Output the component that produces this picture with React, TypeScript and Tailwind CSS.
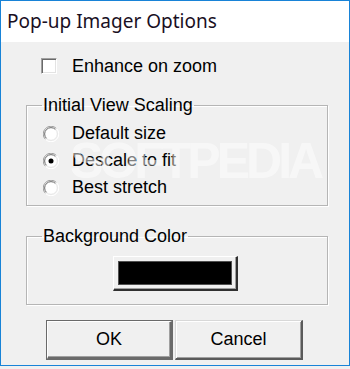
import React from "react";

function Checkbox() {
  return (
    <div className="w-[16px] h-[16px] shrink-0 bg-white border-t border-l border-[#a0a0a0] border-r-white border-b-white border-r border-b shadow-[inset_1px_1px_0_#696969,inset_-1px_-1px_0_#e3e3e3]" />
  );
}

function Radio({ checked }: { checked?: boolean }) {
  return (
    <svg width="16" height="16" viewBox="0 0 16 16" className="shrink-0">
      <circle cx="8" cy="8" r="7" fill="#ffffff" />
      <path d="M2.5 13.5 A7.5 7.5 0 0 1 13.5 2.5" fill="none" stroke="#a0a0a0" strokeWidth="1" />
      <path d="M3.5 12.5 A6 6 0 0 1 12.5 3.5" fill="none" stroke="#696969" strokeWidth="1" />
      <path d="M13.5 2.5 A7.5 7.5 0 0 1 2.5 13.5" fill="none" stroke="#ffffff" strokeWidth="1" />
      <path d="M12.5 3.5 A6 6 0 0 1 3.5 12.5" fill="none" stroke="#e3e3e3" strokeWidth="1" />
      {checked && <circle cx="8" cy="8" r="2.5" fill="#000" />}
    </svg>
  );
}

function RadioRow({ label, checked }: { label: string; checked?: boolean }) {
  return (
    <div className="h-[27px] flex items-center gap-[13px]">
      <Radio checked={checked} />
      <span className="text-[18px] leading-[21px] text-black">{label}</span>
    </div>
  );
}

export default function App() {
  return (
    <div
      className="w-[350px] h-[369px] bg-[#f0f0f0] relative overflow-hidden"
      style={{ fontFamily: '"Liberation Sans", Arial, sans-serif' }}
    >
      <div className="h-[366px] border border-[#1883d7] flex flex-col">
        <div
          className="h-[41px] shrink-0 bg-white flex items-center pl-[6px] text-[19px] text-[#1a0f1f]"
          style={{ fontFamily: '"Noto Sans", "Open Sans", sans-serif' }}
        >
          Pop-up Imager Options
        </div>
        <div className="flex-1 bg-[#f0f0f0] flex flex-col">
          <div className="mt-[16px] ml-[40px] h-[16px] flex items-center gap-[15px]">
            <Checkbox />
            <span className="text-[18px] leading-[21px] text-black">Enhance on zoom</span>
          </div>

          <fieldset className="mt-[21px] ml-[25px] w-[302px] h-[111px] border border-[#b5b5b5] shadow-[inset_1px_1px_0_#ffffff,1px_1px_0_#ffffff] pl-[16px]">
            <legend className="ml-[-1px] px-[1px] text-[18px] leading-[21px] text-black">
              Initial View Scaling
            </legend>
            <div className="mt-[4px] flex flex-col">
              <RadioRow label="Default size" />
              <RadioRow label="Descale to fit" checked />
              <RadioRow label="Best stretch" />
            </div>
          </fieldset>

          <fieldset className="mt-[20px] ml-[25px] w-[302px] h-[79px] border border-[#b5b5b5] shadow-[inset_1px_1px_0_#ffffff,1px_1px_0_#ffffff] pl-[16px]">
            <legend className="ml-[-1px] px-[1px] text-[18px] leading-[21px] text-black">
              Background Color
            </legend>
            <div className="mt-[9px] ml-[70px] w-[125px] h-[35px] border-t border-l border-white border-r-[#303030] border-b-[#303030] border-r-2 border-b-2 p-[4px] shadow-[inset_-1px_-1px_0_#a0a0a0]">
              <div className="w-full h-full bg-black border border-[#505050]" />
            </div>
          </fieldset>

          <div className="mt-[15px] ml-[45px] flex gap-[2px]">
            <div className="w-[127px] h-[40px] border border-[#6a6a6a] flex">
              <div className="flex-1 border-t border-l border-white border-r-[#6a6a6a] border-b-[#6a6a6a] border-r-2 border-b-2 shadow-[inset_-1px_-1px_0_#a0a0a0] flex items-center justify-center text-[18px] text-black">
                OK
              </div>
            </div>
            <div className="w-[128px] h-[40px] border-t border-l border-[#d8d8d8] border-r-[#5a5a5a] border-b-[#5a5a5a] border-r-2 border-b-2 shadow-[inset_1px_1px_0_#ffffff,inset_-1px_-1px_0_#a0a0a0] flex items-center justify-center text-[18px] text-black">
              Cancel
            </div>
          </div>
        </div>
      </div>

      <div
        aria-hidden="true"
        className="absolute left-[70px] top-[136px] pointer-events-none select-none text-[50px] leading-[50px] font-bold tracking-[-4px] text-white opacity-50"
        style={{ fontFamily: '"Liberation Sans", Arial, sans-serif' }}
      >
        SOFTPEDIA
      </div>
    </div>
  );
}
